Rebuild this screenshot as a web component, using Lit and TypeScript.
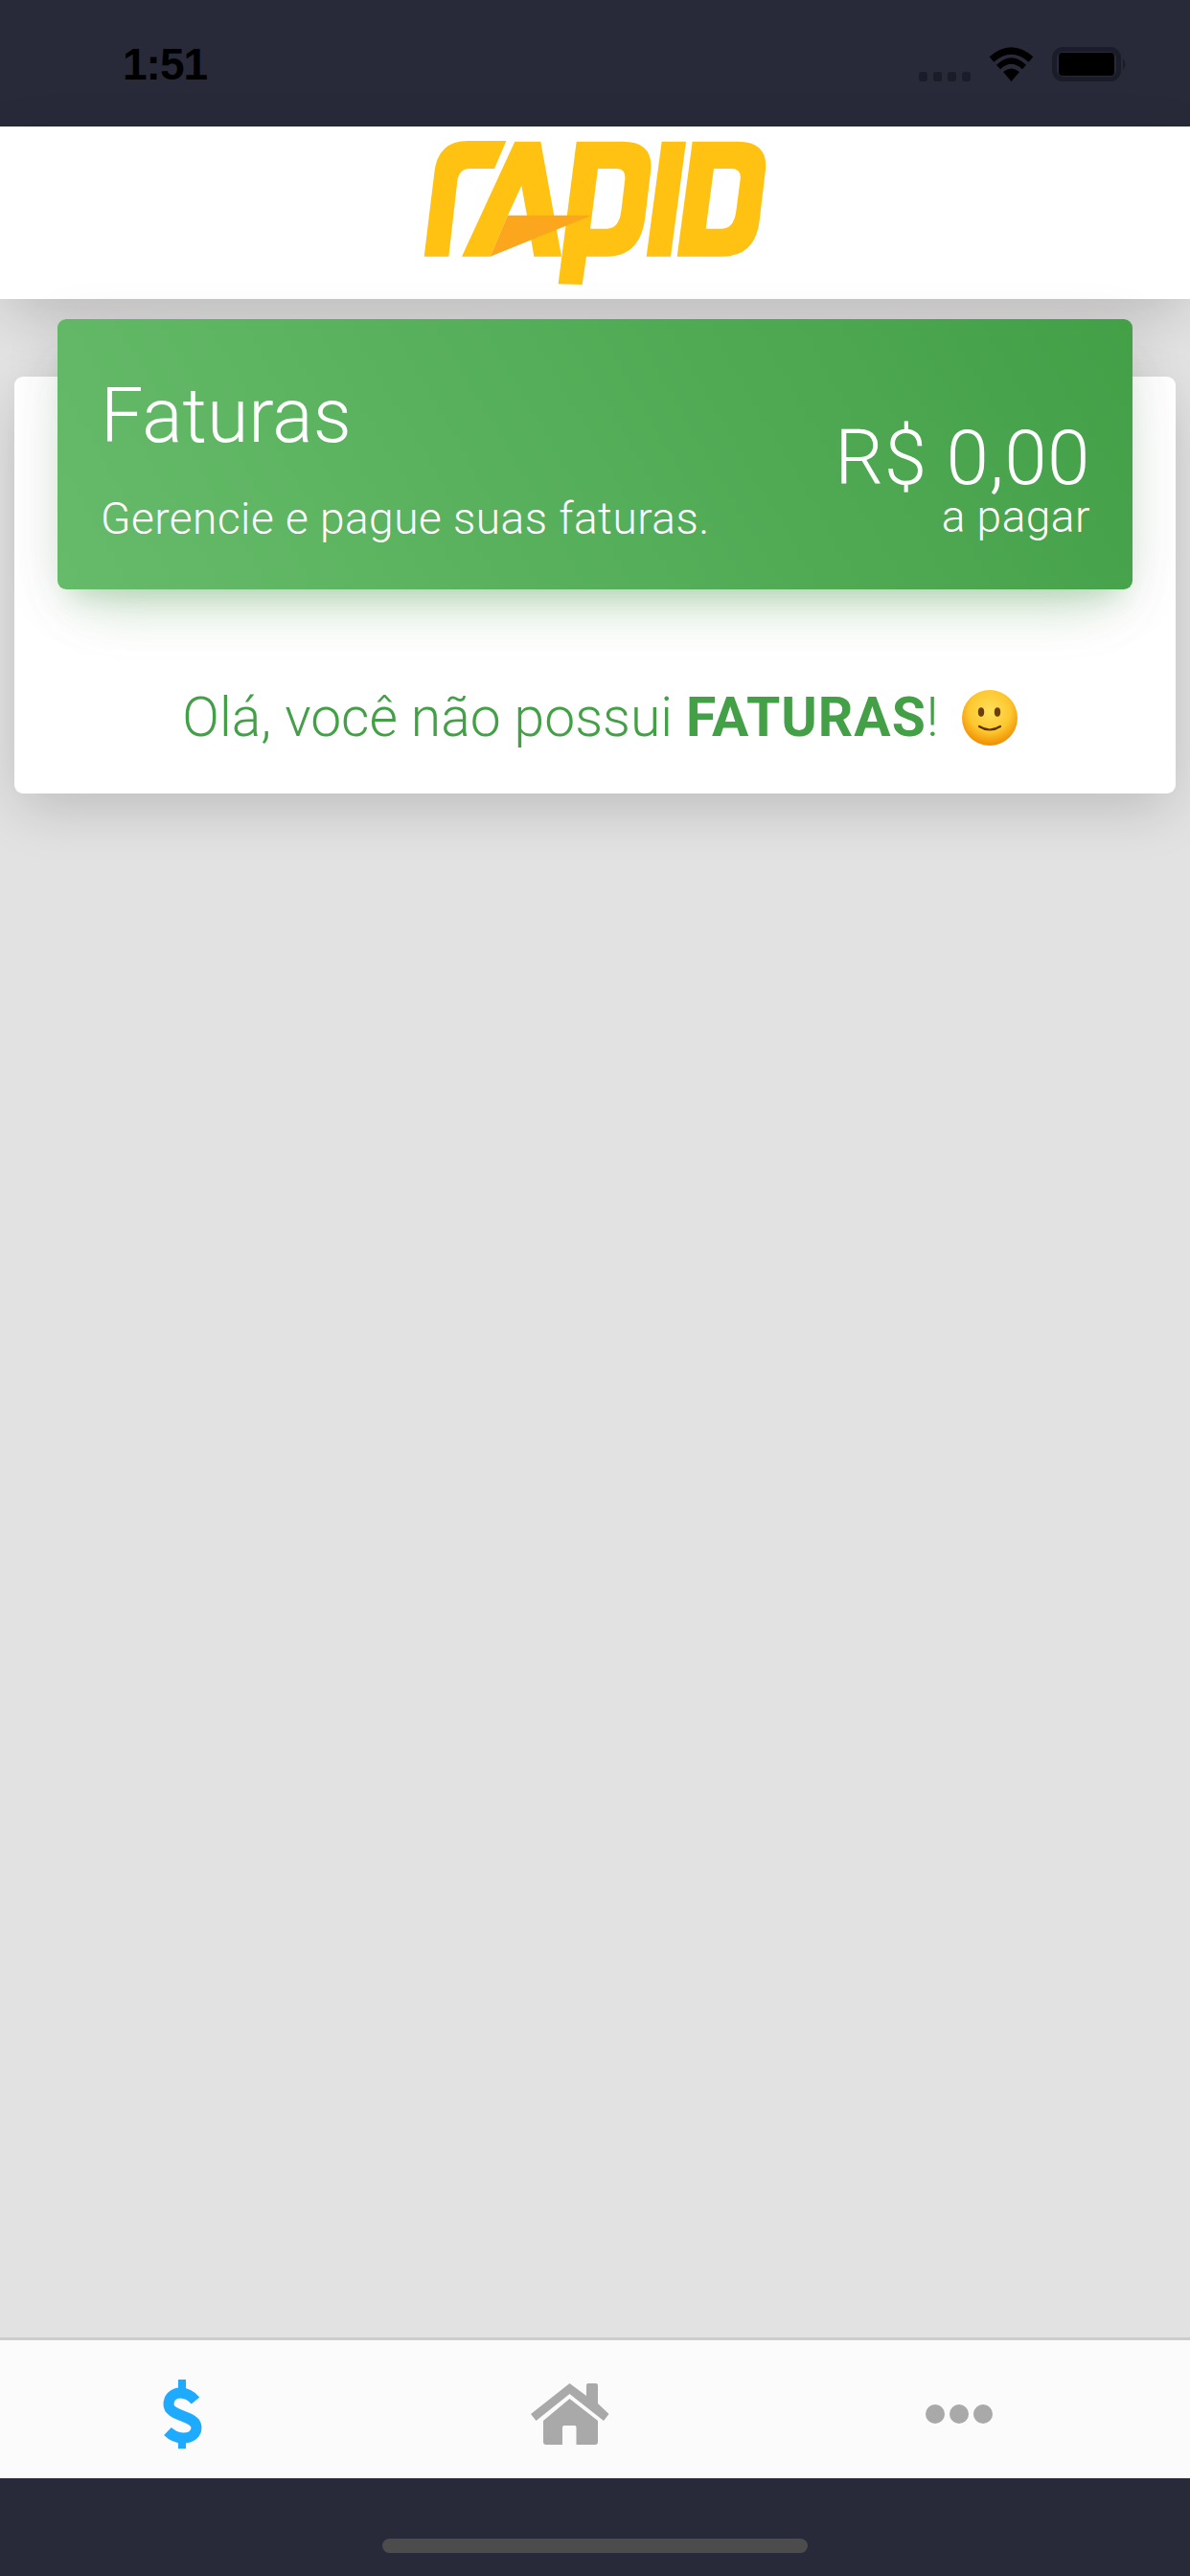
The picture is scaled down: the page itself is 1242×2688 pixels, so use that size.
import { LitElement, css, html, svg } from 'lit';
import { customElement } from 'lit/decorators.js';

const logo = svg`
  <path fill="#ffc212" d="M68 412 L100 150 Q110 50 205 50 L325 50 L288 137 L210 137 Q178 137 172 175 L145 412 Z"/>
  <path fill="#ffc212" d="M186 412 L352 52 L433 52 L498 412 L412 412 L390 283 L373 190 L330 283 L275 412 Z"/>
  <path fill="#ffc212" fill-rule="evenodd" d="M545 52 L690 52 Q785 52 778 140 L760 290 Q745 412 640 412 L576 412 L563 500 L488 498 Z M612 137 L670 137 Q700 137 697 170 L685 270 Q678 325 640 325 L588 325 Z"/>
  <path fill="#ffc212" d="M812 52 L888 52 L840 412 L764 412 Z"/>
  <path fill="#ffc212" fill-rule="evenodd" d="M908 52 L1050 52 Q1145 52 1137 140 L1118 300 Q1105 412 1000 412 L860 412 Z M975 137 L1030 137 Q1062 137 1058 170 L1045 270 Q1038 325 1000 325 L950 325 Z"/>
  <path fill="#fba61c" d="M330 283 L593 283 L275 412 Z"/>
`;

@customElement('app-root')
export class AppRoot extends LitElement {
  static styles = css`
    :host {
      display: flex;
      flex-direction: column;
      height: 2688px;
      background: #e2e2e2;
      font-family: Roboto, 'Liberation Sans', sans-serif;
      overflow: hidden;
    }

    .status {
      height: 132px;
      flex: none;
      box-sizing: border-box;
      background: #282a3a;
      display: flex;
      justify-content: space-between;
      align-items: flex-start;
      padding: 49px 65px 0 128px;
    }
    .time {
      font-family: 'Liberation Sans', sans-serif;
      font-weight: 700;
      font-size: 46px;
      line-height: 36px;
      color: #000;
      letter-spacing: -1px;
    }
    .status-icons {
      display: flex;
      align-items: flex-end;
      gap: 19px;
    }
    .signal { display: flex; gap: 6px; }
    .signal i {
      display: block;
      width: 9px;
      height: 10px;
      border-radius: 3px;
      background: #1b1c29;
    }

    .header {
      height: 180px;
      flex: none;
      background: #fff;
      display: flex;
      justify-content: center;
      align-items: center;
      box-shadow: 0 18px 60px -6px rgba(0, 0, 0, .18);
      position: relative;
      z-index: 2;
    }

    main {
      flex: 1;
      padding: 81px 15px 0;
    }
    .card {
      display: flow-root;
      background: #fff;
      border-radius: 9px;
      box-shadow: 0 18px 60px -6px rgba(0, 0, 0, .18);
      padding: 0 45px;
      height: 435px;
      box-sizing: border-box;
    }
    .card-head {
      position: relative;
      z-index: 3;
      margin-top: -60px;
      height: 282px;
      box-sizing: border-box;
      border-radius: 9px;
      background: linear-gradient(60deg, #66bb6a, #43a047);
      box-shadow: 0 36px 60px -30px rgba(76, 175, 80, .28), 0 12px 60px rgba(0, 0, 0, .1), 0 21px 24px -15px rgba(76, 175, 80, .2);
      color: #fff;
      padding: 56px 44px 0 45px;
      display: flex;
      justify-content: space-between;
      font-weight: 300;
    }
    .col-right { text-align: right; padding-top: 51px; }
    .big { font-size: 79px; line-height: 90px; }
    .col-right .big { font-size: 80px; line-height: 76px; letter-spacing: .5px; }
    .sub { font-size: 46px; line-height: 52px; letter-spacing: .5px; }
    .col-left .sub { margin-top: 36px; }
    .col-right .sub { line-height: 46px; }

    .empty {
      margin-top: 102px;
      padding-left: 10px;
      display: flex;
      justify-content: center;
      align-items: center;
      gap: 24px;
      color: #43a047;
      font-size: 57px;
      font-weight: 300;
      line-height: 64px;
    }
    .empty b { font-weight: 700; letter-spacing: 1px; }

    .tabs {
      height: 147px;
      flex: none;
      box-sizing: border-box;
      border-top: 3px solid #ccc;
      padding-top: 10px;
      background: #fbfbfb;
      display: grid;
      grid-template-columns: 382px 425px 388px;
      justify-items: center;
      align-items: center;
    }
    .tabs svg { display: block; }

    .bottom {
      height: 102px;
      flex: none;
      background: #282a3a;
      display: flex;
      justify-content: center;
      padding-top: 63px;
      box-sizing: border-box;
    }
    .indicator {
      width: 444px;
      height: 15px;
      border-radius: 8px;
      background: #4c4c4c;
    }
  `;

  render() {
    return html`
      <div class="status">
        <div class="time">1:51</div>
        <div class="status-icons">
          <div class="signal"><i></i><i></i><i></i><i></i></div>
          <svg width="47" height="36" viewBox="0 0 47 36">
            <path d="M3 13 Q23.5 -5 44 13" fill="none" stroke="#000" stroke-width="7"/>
            <path d="M10 21 Q23.5 8 37 21" fill="none" stroke="#000" stroke-width="6"/>
            <path d="M15 26 Q23.5 19 32 26 L23.5 36 Z" fill="#000"/>
          </svg>
          <svg width="79" height="36" viewBox="0 0 79 36">
            <rect x="2.5" y="2.5" width="67" height="31" rx="9" fill="none" stroke="#1b1c29" stroke-width="5"/>
            <rect x="7" y="6" width="58" height="24" rx="4" fill="#000"/>
            <path d="M74 12 Q79 18 74 24 Z" fill="#1b1c29"/>
          </svg>
        </div>
      </div>

      <div class="header">
        <svg width="362" height="150" viewBox="60 50 1086 450">${logo}</svg>
      </div>

      <main>
        <div class="card">
          <div class="card-head">
            <div class="col-left">
              <div class="big">Faturas</div>
              <div class="sub">Gerencie e pague suas faturas.</div>
            </div>
            <div class="col-right">
              <div class="big">R$ 0,00</div>
              <div class="sub">a pagar</div>
            </div>
          </div>
          <div class="empty">
            <span>Olá, você não possui <b>FATURAS</b>!</span>
            ${this.smiley()}
          </div>
        </div>
      </main>

      <div class="tabs">
        <svg width="48" height="72" viewBox="168 2483 48 72">
          <path d="M187 2483 h8 v12 h-8 Z M187 2544 h8 v11 h-8 Z" fill="#1eaaff"/>
          <path d="M205 2505 C200 2499 194 2497 189 2497 C181 2497 177 2503 177 2509 C177 2522 206 2520 206 2533 C206 2540 200 2544 192 2544 C187 2544 181 2542 176 2537" fill="none" stroke="#1eaaff" stroke-width="11"/>
        </svg>
        <svg width="82" height="64" viewBox="554 2487 82 64">
          <path fill="#a9a9a9" d="M594.5 2487 L612 2500 L612 2489 Q612 2487 614 2487 L622 2487 Q624 2487 624 2489 L624 2508 L635.5 2519 L630 2526 L594.5 2498 L559.5 2526 L554 2519 Z"/>
          <path fill="#a9a9a9" d="M594.5 2503 L624 2526 L624 2548 Q624 2551 621 2551 L601.5 2551 L601.5 2533 Q601.5 2531 600 2531 L589 2531 Q587 2531 587 2533 L587 2551 L570 2551 Q567 2551 567 2548 L567 2526 Z"/>
        </svg>
        <svg width="70" height="20" viewBox="0 0 70 20">
          <circle cx="10" cy="10" r="10" fill="#a9a9a9"/>
          <circle cx="35" cy="10" r="10" fill="#a9a9a9"/>
          <circle cx="60" cy="10" r="10" fill="#a9a9a9"/>
        </svg>
      </div>

      <div class="bottom"><div class="indicator"></div></div>
    `;
  }

  smiley() {
    return html`<svg width="58" height="58" viewBox="0 0 58 58">
      <defs>
        <radialGradient id="face" cx="50%" cy="38%" r="62%">
          <stop offset="0" stop-color="#ffe05a"/>
          <stop offset=".6" stop-color="#fdc830"/>
          <stop offset="1" stop-color="#f08c00"/>
        </radialGradient>
      </defs>
      <circle cx="29" cy="29" r="29" fill="url(#face)"/>
      <ellipse cx="20" cy="23" rx="3.2" ry="4.8" fill="#6b3f0a"/>
      <ellipse cx="37" cy="23" rx="3.2" ry="4.8" fill="#6b3f0a"/>
      <path d="M18 38 Q29 45 40 38" fill="none" stroke="#5a3208" stroke-width="2.2" stroke-linecap="round"/>
    </svg>`;
  }
}
